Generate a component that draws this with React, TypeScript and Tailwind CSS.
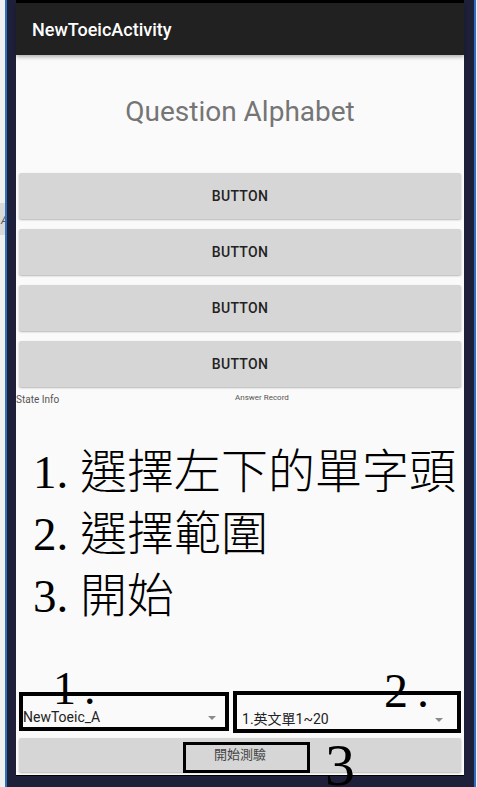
const ui = { fontFamily: 'Roboto, "Noto Sans CJK TC", sans-serif' }
const serif = { fontFamily: '"Liberation Serif", "Noto Sans CJK TC", serif' }

function RaisedButton({ label }: { label: string }) {
  return (
    <div className="h-[46px] rounded-[2px] bg-[#d6d6d6] shadow-[0_1px_2px_rgba(0,0,0,0.28)] flex items-center justify-center">
      <span className="text-[14px] font-medium tracking-[0.3px] text-[#222]">{label}</span>
    </div>
  )
}

function Caret() {
  return <div className="w-0 h-0 border-l-[4px] border-r-[4px] border-t-[4px] border-l-transparent border-r-transparent border-t-[#8a8a8a]" />
}

function StepLine({ num, text }: { num: string; text: string }) {
  return (
    <div className="h-[62px] leading-[62px] text-[47px] font-light text-black whitespace-nowrap" style={serif}>
      <span className="inline-block w-[47px]">{num}</span>
      {text}
    </div>
  )
}

export default function App() {
  return (
    <div className="w-[477px] h-[787px] overflow-hidden flex bg-[#1e2039]" style={ui}>
      {/* desktop strip on the left */}
      <div className="w-[5px] bg-[#f0f0f0] flex flex-col">
        <div className="mt-[203px] h-[32px] bg-[#d9d9d9] overflow-hidden">
          <span className="block mt-[10px] ml-[1px] text-[11px] italic text-[#555]">A</span>
        </div>
      </div>
      <div className="w-[2px] bg-[#2f6fc0]" />
      <div className="w-[9px]" />

      {/* phone screen */}
      <div className="w-[448px] flex flex-col">
        <div className="h-[3px] bg-black" />
        <div className="h-[52px] bg-[#212121] flex items-center pl-4 relative z-10 shadow-[0_2px_4px_rgba(0,0,0,0.3)]">
          <span className="text-[18px] font-medium text-white">NewToeicActivity</span>
        </div>

        <div className="h-[721px] bg-[#fafafa] flex flex-col relative">
          <div className="pt-[40px] text-center text-[28px] leading-[34px] text-[#757575]">Question Alphabet</div>

          <div className="mt-[44px] px-[3px] flex flex-col gap-[10px]">
            <RaisedButton label="BUTTON" />
            <RaisedButton label="BUTTON" />
            <RaisedButton label="BUTTON" />
            <RaisedButton label="BUTTON" />
          </div>

          <div className="mt-[5px] h-[14px] flex items-center">
            <span className="w-[219px] text-[10px] text-[#555]">State Info</span>
            <span className="text-[8px] text-[#555] -mt-[3px]">Answer Record</span>
          </div>

          <div className="mt-[35px] pl-[17px]">
            <StepLine num="1." text="選擇左下的單字頭" />
            <StepLine num="2." text="選擇範圍" />
            <StepLine num="3." text="開始" />
          </div>

          {/* spinners */}
          <div className="mt-[64px] px-[3px] flex items-start gap-[4px] relative">
            <div className="mt-[1px] w-[211px] h-[39px] border-[4px] border-black flex items-end justify-between pb-[2px] pr-[9px]">
              <span className="text-[14px] leading-[16px] text-[#222]">NewToeic_A</span>
              <div className="mb-[5px]"><Caret /></div>
            </div>
            <div className="w-[229px] h-[42px] border-[4px] border-black flex items-end justify-between pb-[2px] pl-[5px] pr-[14px]">
              <span className="text-[14px] leading-[16px] text-[#222]">1.英文單1~20</span>
              <div className="mb-[5px]"><Caret /></div>
            </div>
            <div className="absolute left-[37px] -top-[25px] text-[46px] leading-none text-black" style={serif}>
              <span>1</span><span className="ml-[8px]">.</span>
            </div>
            <div className="absolute left-[368px] -top-[24px] text-[48px] leading-none text-black" style={serif}>
              <span>2</span><span className="ml-[9px]">.</span>
            </div>
          </div>

          {/* start button */}
          <div className="mt-[5px] px-[3px] relative">
            <div className="h-[34px] rounded-[2px] bg-[#d6d6d6] shadow-[0_1px_2px_rgba(0,0,0,0.28)] flex items-center justify-center">
              <span className="text-[13px] text-[#444]">開始測驗</span>
            </div>
            <div className="absolute left-[167px] top-[4px] w-[127px] h-[31px] border-[3px] border-black" />
            <div className="absolute left-[309px] -top-[3px] text-[60px] leading-none text-black" style={serif}>3</div>
          </div>

          <div className="mt-auto h-[1px] bg-black" />
        </div>
      </div>

      <div className="w-[10px]" />
      <div className="w-[2px] bg-[#2f6fc0]" />
      <div className="w-[1px] bg-[#f0f0f0]" />
    </div>
  )
}
